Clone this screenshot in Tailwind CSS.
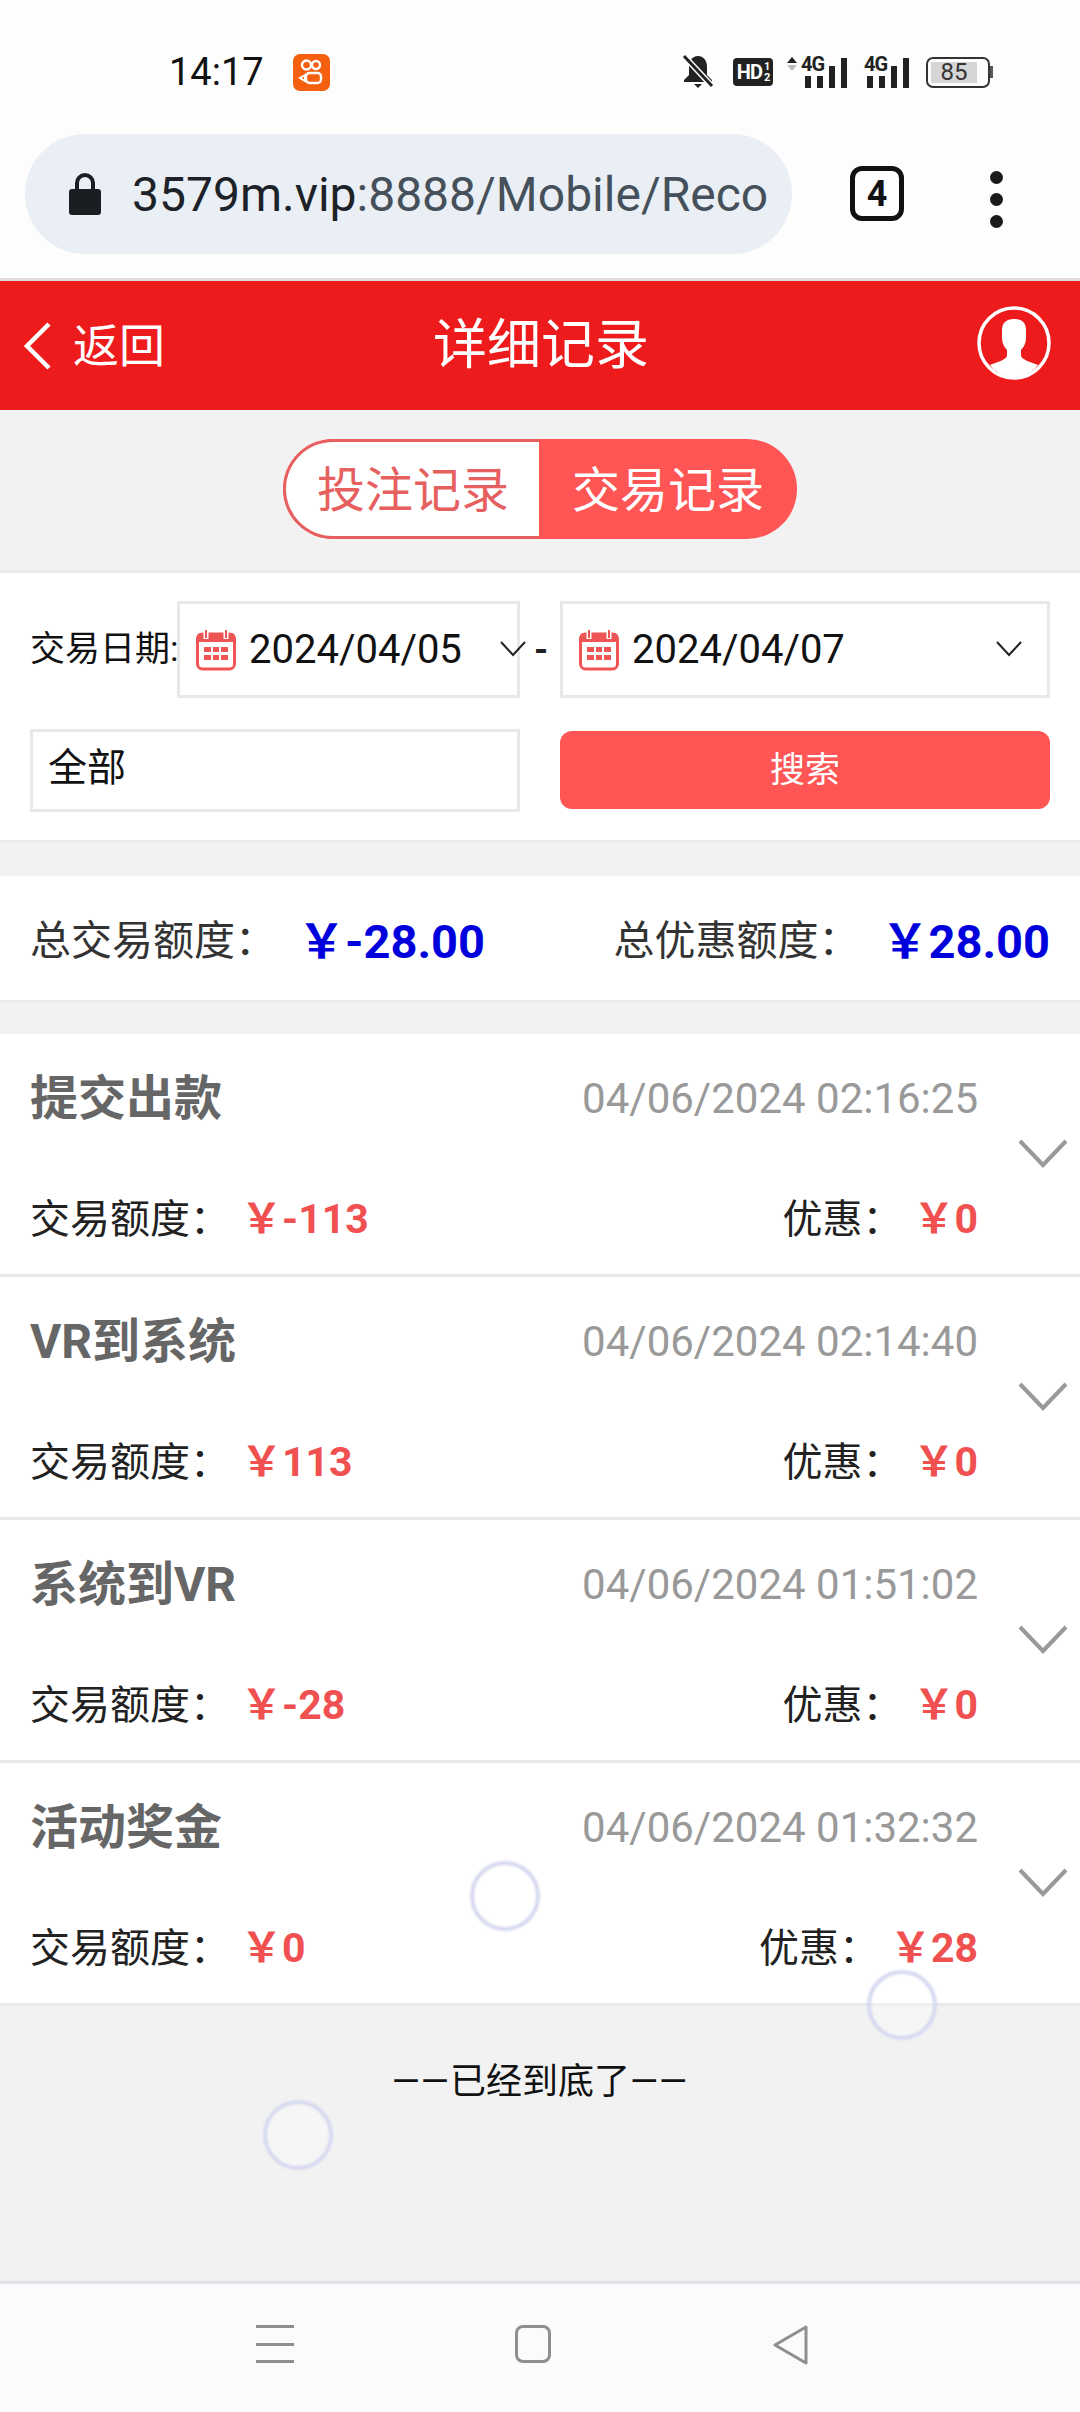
<!DOCTYPE html>
<html lang="zh-CN">

<head>
    <meta charset="UTF-8">
    <meta name="viewport" content="width=device-width, initial-scale=1.0">
    <title>详细记录</title>
    <script src="https://cdn.jsdelivr.net/npm/@tailwindcss/browser@4"></script>
</head>

<body class="bg-[#f2f2f2] font-['Roboto','Noto_Sans_CJK_SC',sans-serif]">
    <div class="relative w-[1080px] h-[2412px] overflow-hidden flex flex-col">
        <!-- 状态栏 -->
        <div class="bg-[#fdfdfe] h-[134px] shrink-0 flex items-center justify-between pl-[169px] pr-[87px] pt-[10px]">
            <div class="flex items-center gap-[29px]">
                <span class="text-[38px] leading-none text-[#111]">14:17</span>
                <div class="w-[37px] h-[37px] rounded-[7px] bg-[#f4600f] flex items-center justify-center">
                    <svg width="28" height="28" viewBox="0 0 28 28" fill="none" stroke="#fff" stroke-width="2.4"><circle cx="9.5" cy="7" r="4.5"/><circle cx="19" cy="7" r="4"/><rect x="9" y="15" width="15" height="10" rx="3.5"/><path d="M8 17l-5 3 5 3z" stroke-width="2"/></svg>
                </div>
            </div>
            <div class="flex items-center">
                <svg width="34" height="38" viewBox="0 0 34 38"><path d="M17 3c-6 0-9 5-9 11v8l-5 5v2h28v-2l-5-5v-8c0-6-3-11-9-11z M13 31h8l-4 4z" fill="#222"/><path d="M3 3l28 30" stroke="#fdfdfe" stroke-width="6"/><path d="M3 3l28 30" stroke="#222" stroke-width="3"/></svg>
                <div class="w-[40px] h-[28px] bg-[#222] rounded-[4px] ml-[18px] flex items-center justify-center text-white text-[20px] font-bold leading-none tracking-[-1px]">HD<span class="flex flex-col text-[11px] leading-[11px] ml-[2px]"><span>1</span><span>2</span></span></div>
                <div class="relative w-[60px] h-[32px] ml-[14px]">
                    <span class="absolute left-0 top-[1px] w-0 h-0 border-x-[5px] border-x-transparent border-b-[6px] border-b-[#222]"></span>
                    <span class="absolute left-0 top-[9px] w-0 h-0 border-x-[5px] border-x-transparent border-t-[6px] border-t-[#bbb]"></span>
                    <span class="absolute left-[14px] -top-[2px] text-[20px] leading-none font-bold text-[#222] tracking-[-1px]">4G</span>
                    <div class="absolute left-[18px] bottom-0 flex items-end gap-[6px]">
                        <i class="block w-[6px] h-[12px] bg-[#222]"></i><i class="block w-[6px] h-[12px] bg-[#222]"></i><i class="block w-[6px] h-[22px] bg-[#222]"></i><i class="block w-[6px] h-[30px] bg-[#222]"></i>
                    </div>
                </div>
                <div class="relative w-[46px] h-[32px] ml-[17px]">
                    <span class="absolute left-0 -top-[2px] text-[20px] leading-none font-bold text-[#222] tracking-[-1px]">4G</span>
                    <div class="absolute left-[3px] bottom-0 flex items-end gap-[6px]">
                        <i class="block w-[6px] h-[12px] bg-[#222]"></i><i class="block w-[6px] h-[12px] bg-[#222]"></i><i class="block w-[6px] h-[22px] bg-[#222]"></i><i class="block w-[6px] h-[30px] bg-[#222]"></i>
                    </div>
                </div>
                <div class="flex items-center ml-[16px]">
                    <div class="w-[64px] h-[31px] border-[2px] border-[#333] rounded-[7px] p-[3px]">
                        <div class="w-[46px] h-full bg-[#d6d6d6] text-[24px] leading-[21px] text-[#333] text-center">85</div>
                    </div>
                    <i class="block w-[3px] h-[12px] bg-[#555]"></i>
                </div>
            </div>
        </div>

        <!-- 浏览器地址栏 -->
        <div class="bg-[#fdfdfe] h-[144px] shrink-0 pl-[25px] flex items-start">
            <div class="w-[767px] h-[120px] rounded-[60px] bg-[#e9eff4] flex items-center pl-[43px] gap-[30px]">
                <svg width="34" height="44" viewBox="0 0 34 44" class="shrink-0"><path d="M9 18v-7a8 8 0 0 1 16 0v7" fill="none" stroke="#1a1e22" stroke-width="4"/><rect x="1" y="17" width="32" height="26" rx="3" fill="#1a1e22"/></svg>
                <span class="text-[48px] leading-none whitespace-nowrap text-[#1c2228] pt-[2px]">3579m.vip<span class="text-[#46505a]">:8888/Mobile/Reco</span></span>
            </div>
            <div class="ml-[58px] mt-[32px] w-[54px] h-[55px] border-[5px] border-[#111] rounded-[12px] flex items-center justify-center text-[36px] font-bold leading-none text-[#111]">4</div>
            <div class="ml-[86px] mt-[37px] flex flex-col gap-[9px]">
                <i class="block w-[13px] h-[13px] rounded-full bg-[#1a1a1a]"></i>
                <i class="block w-[13px] h-[13px] rounded-full bg-[#1a1a1a]"></i>
                <i class="block w-[13px] h-[13px] rounded-full bg-[#1a1a1a]"></i>
            </div>
        </div>

        <!-- 顶部导航 -->
        <div class="h-[132px] shrink-0 bg-[#ed1b1b] border-t-[3px] border-t-[#e3dada] flex items-center justify-between relative text-white">
            <div class="flex items-center pl-[22px] gap-[21px]">
                <svg width="30" height="50" viewBox="0 0 30 50" fill="none" stroke="#fff" stroke-width="4.5"><path d="M27 3L5 25l22 22"/></svg>
                <span class="text-[46px] leading-none">返回</span>
            </div>
            <span class="absolute left-[433px] text-[54px] leading-none">详细记录</span>
            <svg width="74" height="74" viewBox="0 0 74 74" class="mr-[29px] mb-[5px]">
                <circle cx="37" cy="37" r="35" fill="#ed1b1b" stroke="#fff" stroke-width="3.5"/>
                <path d="M37 13c-8 0-12 4-12 11v8c0 5 2 9 5 12v5c0 4-6 6-17 10a30 30 0 0 0 48 0c-11-4-17-6-17-10v-5c3-3 5-7 5-12v-8c0-7-4-11-12-11z" fill="#fff"/>
            </svg>
        </div>

        <!-- 切换标签 -->
        <div class="h-[160px] shrink-0 pt-[29px] flex justify-center">
            <div class="flex w-[514px] h-[100px] rounded-[50px] overflow-hidden bg-[#ff5555]">
                <div class="w-[256px] flex items-center justify-center text-[48px] leading-none text-[#e66060] bg-white border-[3px] border-r-0 border-[#e66060] rounded-l-[50px] pl-[1px] pt-[4px]">投注记录</div>
                <div class="flex-1 flex items-center justify-center text-[48px] leading-none text-white pt-[4px]">交易记录</div>
            </div>
        </div>

        <!-- 筛选 -->
        <div class="h-[273px] shrink-0 bg-white border-y-[3px] border-y-[#ebebeb] pt-[28px] px-[30px]">
            <div class="flex items-center">
                <span class="w-[147px] shrink-0 text-[35px] leading-none whitespace-nowrap text-[#111]">交易日期:</span>
                <div class="w-[343px] h-[97px] border-[3px] border-[#e8e8e8] flex items-center pl-[16px] relative">
                    <svg width="40" height="42" viewBox="0 0 40 42" class="shrink-0"><rect x="1.5" y="5" width="37" height="35" rx="5" fill="#fff" stroke="#f05555" stroke-width="3"/><path d="M1 13V8a4 4 0 0 1 4-4h30a4 4 0 0 1 4 4v5z" fill="#f05555"/><path d="M10 1v9M30 1v9" stroke="#fff" stroke-width="5"/><path d="M10 1v8M30 1v8" stroke="#f05555" stroke-width="2"/><path d="M8 18h7v5H8zM17 18h6v5h-6zM25 18h7v5h-7zM8 26h7v5H8zM17 26h6v5h-6zM25 26h7v5h-7z" fill="#f05555"/></svg>
                    <span class="ml-[13px] text-[40px] leading-none text-[#111]">2024/04/05</span>
                    <svg width="26" height="16" viewBox="0 0 26 16" fill="none" stroke="#222" stroke-width="2" class="absolute right-[-9px] top-[37px]"><path d="M1 1l12 13L25 1"/></svg>
                </div>
                <span class="w-[40px] shrink-0 text-[36px] leading-none font-bold text-[#222] pl-[14px]">-</span>
                <div class="w-[490px] h-[97px] border-[3px] border-[#e8e8e8] flex items-center pl-[16px] relative">
                    <svg width="40" height="42" viewBox="0 0 40 42" class="shrink-0"><rect x="1.5" y="5" width="37" height="35" rx="5" fill="#fff" stroke="#f05555" stroke-width="3"/><path d="M1 13V8a4 4 0 0 1 4-4h30a4 4 0 0 1 4 4v5z" fill="#f05555"/><path d="M10 1v9M30 1v9" stroke="#fff" stroke-width="5"/><path d="M10 1v8M30 1v8" stroke="#f05555" stroke-width="2"/><path d="M8 18h7v5H8zM17 18h6v5h-6zM25 18h7v5h-7zM8 26h7v5H8zM17 26h6v5h-6zM25 26h7v5h-7z" fill="#f05555"/></svg>
                    <span class="ml-[13px] text-[40px] leading-none text-[#111]">2024/04/07</span>
                    <svg width="26" height="16" viewBox="0 0 26 16" fill="none" stroke="#222" stroke-width="2" class="absolute right-[25px] top-[37px]"><path d="M1 1l12 13L25 1"/></svg>
                </div>
            </div>
            <div class="flex gap-[40px] mt-[31px]">
                <div class="w-[490px] h-[83px] border-[3px] border-[#e8e8e8] flex items-center pl-[15px] pb-[4px] text-[39px] leading-none text-[#111]">全部</div>
                <div class="w-[490px] h-[78px] mt-[2px] rounded-[12px] bg-[#ff5555] flex items-center justify-center text-[35px] leading-none text-white">搜索</div>
            </div>
        </div>

        <!-- 汇总 -->
        <div class="mt-[33px] h-[127px] shrink-0 bg-white border-b-[3px] border-b-[#ebebeb] px-[30px] pt-[6px] flex items-center justify-between">
            <div class="flex items-center">
                <span class="w-[268px] text-[41px] leading-none text-[#333]">总交易额度：</span>
                <span class="text-[47px] leading-none font-bold text-[#0000dd]">￥-28.00</span>
            </div>
            <div class="flex items-center">
                <span class="w-[268px] text-[41px] leading-none text-[#333]">总优惠额度：</span>
                <span class="text-[47px] leading-none font-bold text-[#0000dd]">￥28.00</span>
            </div>
        </div>

        <!-- 记录列表 -->
        <div class="mt-[31px] shrink-0">
            <div class="h-[243px] bg-white border-b-[3px] border-b-[#e8e8e8] flex">
                <div class="w-[978px] pl-[30px] pt-[33px]">
                    <div class="flex items-center justify-between h-[64px]">
                        <span class="text-[48px] leading-none font-bold text-[#666]">提交出款</span>
                        <span class="text-[42px] leading-none text-[#999]">04/06/2024 02:16:25</span>
                    </div>
                    <div class="flex items-center justify-between h-[60px] mt-[58px]">
                        <span class="text-[40px] leading-none text-[#222]">交易额度：<b class="ml-[11px] text-[41px] text-[#f05050]">￥-113</b></span>
                        <span class="text-[40px] leading-none text-[#222]">优惠：<b class="ml-[11px] text-[41px] text-[#f05050]">￥0</b></span>
                    </div>
                </div>
                <svg width="50" height="30" viewBox="0 0 50 30" fill="none" stroke="#999" stroke-width="4" class="ml-[40px] mt-[105px]"><path d="M2 2l23 24L48 2"/></svg>
            </div>
            <div class="h-[243px] bg-white border-b-[3px] border-b-[#e8e8e8] flex">
                <div class="w-[978px] pl-[30px] pt-[33px]">
                    <div class="flex items-center justify-between h-[64px]">
                        <span class="text-[48px] leading-none font-bold text-[#666]">VR到系统</span>
                        <span class="text-[42px] leading-none text-[#999]">04/06/2024 02:14:40</span>
                    </div>
                    <div class="flex items-center justify-between h-[60px] mt-[58px]">
                        <span class="text-[40px] leading-none text-[#222]">交易额度：<b class="ml-[11px] text-[41px] text-[#f05050]">￥113</b></span>
                        <span class="text-[40px] leading-none text-[#222]">优惠：<b class="ml-[11px] text-[41px] text-[#f05050]">￥0</b></span>
                    </div>
                </div>
                <svg width="50" height="30" viewBox="0 0 50 30" fill="none" stroke="#999" stroke-width="4" class="ml-[40px] mt-[105px]"><path d="M2 2l23 24L48 2"/></svg>
            </div>
            <div class="h-[243px] bg-white border-b-[3px] border-b-[#e8e8e8] flex">
                <div class="w-[978px] pl-[30px] pt-[33px]">
                    <div class="flex items-center justify-between h-[64px]">
                        <span class="text-[48px] leading-none font-bold text-[#666]">系统到VR</span>
                        <span class="text-[42px] leading-none text-[#999]">04/06/2024 01:51:02</span>
                    </div>
                    <div class="flex items-center justify-between h-[60px] mt-[58px]">
                        <span class="text-[40px] leading-none text-[#222]">交易额度：<b class="ml-[11px] text-[41px] text-[#f05050]">￥-28</b></span>
                        <span class="text-[40px] leading-none text-[#222]">优惠：<b class="ml-[11px] text-[41px] text-[#f05050]">￥0</b></span>
                    </div>
                </div>
                <svg width="50" height="30" viewBox="0 0 50 30" fill="none" stroke="#999" stroke-width="4" class="ml-[40px] mt-[105px]"><path d="M2 2l23 24L48 2"/></svg>
            </div>
            <div class="h-[243px] bg-white border-b-[3px] border-b-[#e8e8e8] flex">
                <div class="w-[978px] pl-[30px] pt-[33px]">
                    <div class="flex items-center justify-between h-[64px]">
                        <span class="text-[48px] leading-none font-bold text-[#666]">活动奖金</span>
                        <span class="text-[42px] leading-none text-[#999]">04/06/2024 01:32:32</span>
                    </div>
                    <div class="flex items-center justify-between h-[60px] mt-[58px]">
                        <span class="text-[40px] leading-none text-[#222]">交易额度：<b class="ml-[11px] text-[41px] text-[#f05050]">￥0</b></span>
                        <span class="text-[40px] leading-none text-[#222]">优惠：<b class="ml-[11px] text-[41px] text-[#f05050]">￥28</b></span>
                    </div>
                </div>
                <svg width="50" height="30" viewBox="0 0 50 30" fill="none" stroke="#999" stroke-width="4" class="ml-[40px] mt-[105px]"><path d="M2 2l23 24L48 2"/></svg>
            </div>
        </div>

        <!-- 底部提示 -->
        <div class="flex-1 pt-[58px] text-center text-[36px] leading-none text-[#111]"><span class="tracking-[1px]">——</span>已经到底了<span class="tracking-[1px]">——</span></div>

        <!-- 系统导航 -->
        <div class="h-[131px] shrink-0 bg-[#fbfbfe] border-t-[3px] border-t-[#e2e3e8] flex items-start pt-[41px] pl-[256px]">
            <div class="w-[38px] h-[38px] flex flex-col justify-between">
                <i class="block h-[3px] bg-[#8f8f8f]"></i><i class="block h-[3px] bg-[#8f8f8f]"></i><i class="block h-[3px] bg-[#8f8f8f]"></i>
            </div>
            <div class="ml-[221px] w-[36px] h-[38px] rounded-[8px] border-[3px] border-[#8f8f8f]"></div>
            <svg width="36" height="40" viewBox="0 0 36 40" fill="none" stroke="#8f8f8f" stroke-width="3" stroke-linejoin="round" class="ml-[221px]"><path d="M34 2L3 20l31 18z"/></svg>
        </div>

        <!-- 触摸点 -->
        <div class="absolute left-[470px] top-[1861px] w-[70px] h-[70px] rounded-full border-[4px] border-[#d6d9f0] bg-white/30 blur-[1px]"></div>
        <div class="absolute left-[867px] top-[1970px] w-[70px] h-[70px] rounded-full border-[4px] border-[#d6d9f0] bg-white/30 blur-[1px]"></div>
        <div class="absolute left-[263px] top-[2100px] w-[70px] h-[70px] rounded-full border-[4px] border-[#d6d9f0] bg-white/30 blur-[1px]"></div>
    </div>
</body>

</html>
